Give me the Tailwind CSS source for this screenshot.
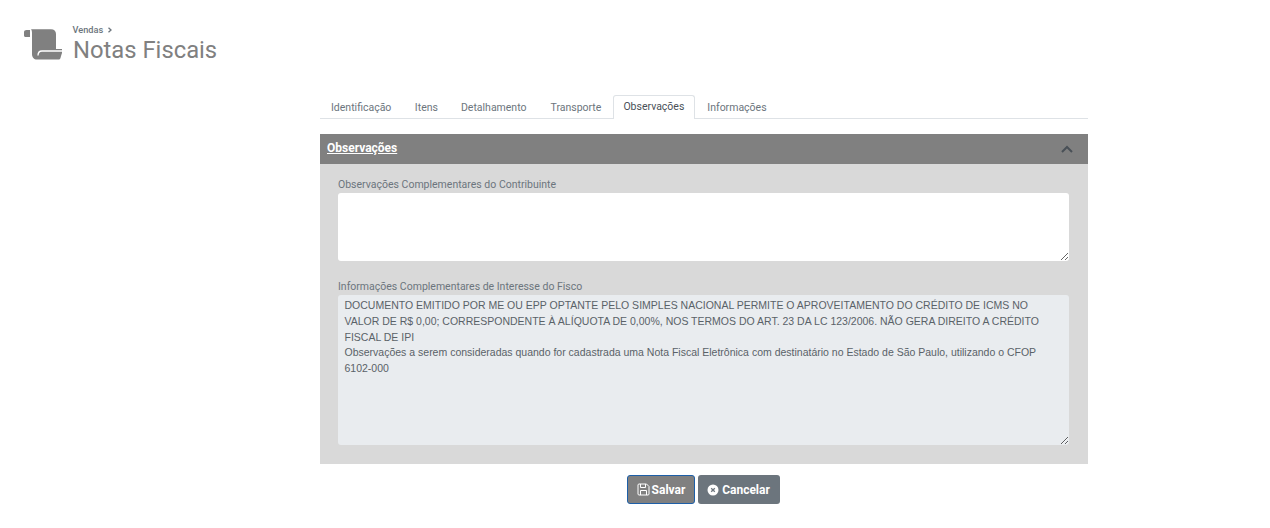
<!DOCTYPE html>
<html lang="pt-BR">
<head>
  <meta charset="UTF-8">
  <title>Notas Fiscais</title>
  <script src="https://cdn.jsdelivr.net/npm/@tailwindcss/browser@4"></script>
</head>
<body class="h-[528px] overflow-hidden bg-white font-['Roboto',sans-serif] text-[#6c757d]">
  <header class="flex items-start pl-[23px] pt-[24px] h-[95px]">
    <svg class="w-[41px] h-[33px] mt-[4px] text-[#808080]" viewBox="0 0 41 33" fill="currentColor">
      <path d="M1 4C1 2.700 2 2 3.500 2H7V9H2.500C1.600 9 1 8.400 1 7.500Z"/>
      <path d="M8 1.300H28C31 1.300 33 3 33 6V21H39V25C38.200 27 38 28.500 37.500 30C37 31 36.500 31.500 35.500 31.500H14C11 31.500 9 29.500 9 26V5C9 3.500 8.800 2.300 8 1.300Z"/>
      <path d="M39 23H19C16.500 23 15 25 15 27.500" fill="none" stroke="#fff" stroke-width="1.300"/>
    </svg>
    <div class="ml-[8.500px]">
      <div class="flex items-center gap-[4px] text-[9.200px] leading-[12px] font-medium text-[#6c757d]">
        <span>Vendas</span>
        <svg class="w-[6px] h-[6px]" viewBox="0 0 6 6" fill="none" stroke="currentColor" stroke-width="1.300"><path d="M1.500 0.800L4 3L1.500 5.200"/></svg>
      </div>
      <h1 class="text-[23.800px] leading-[28px] text-[#808080] ml-[0.500px]">Notas Fiscais</h1>
    </div>
  </header>

  <main class="w-[768px] ml-[320px]">
    <nav class="flex h-[24px] border-b border-[#dee2e6] text-[10.5px] leading-[13px] text-[#6c757d]">
      <a class="pl-[11px] pr-[12px] pt-[6px]">Identificação</a>
      <a class="px-[11.500px] pt-[6px]">Itens</a>
      <a class="pl-[11.500px] pr-[12.500px] pt-[6px]">Detalhamento</a>
      <a class="px-[11.500px] pt-[6px]">Transporte</a>
      <a class="h-[24px] px-[9.500px] pt-[4px] bg-white border border-b-0 border-[#dee2e6] rounded-t-[3px] text-[#495057]">Observações</a>
      <a class="px-[12.500px] pt-[6px]">Informações</a>
    </nav>

    <section class="mt-[15px]">
      <div class="flex items-center justify-between h-[30px] bg-[#808080] pl-[7px] pr-[15px]">
        <span class="text-[12px] leading-[14px] mb-[2px] font-bold text-white underline">Observações</span>
        <svg class="w-[12px] h-[8px] text-[#495057]" viewBox="0 0 12 8" fill="none" stroke="currentColor" stroke-width="2"><path d="M1 7L6 2L11 7"/></svg>
      </div>
      <div class="h-[300px] bg-[#d9d9d9] pl-[18px] pr-[19px] pt-[14px]">
        <label class="block text-[10.5px] leading-[13px] mb-[2px] text-[#6c757d]">Observações Complementares do Contribuinte</label>
        <textarea class="block w-full h-[68px] bg-white rounded-[3px] px-[7px] py-[3px] outline-none"></textarea>
        <label class="block text-[10.5px] leading-[13px] mt-[19px] mb-[2px] text-[#6c757d]">Informações Complementares de Interesse do Fisco</label>
        <textarea readonly class="block w-full h-[150px] bg-[#e9ecef] rounded-[3px] pl-[6.500px] pr-[7px] pt-[3px] outline-none font-['Liberation_Sans',sans-serif] text-[10.5px] leading-[15.750px] text-[#5a6268]">DOCUMENTO EMITIDO POR ME OU EPP OPTANTE PELO SIMPLES NACIONAL PERMITE O APROVEITAMENTO DO CRÉDITO DE ICMS NO VALOR DE R$ 0,00; CORRESPONDENTE À ALÍQUOTA DE 0,00%, NOS TERMOS DO ART. 23 DA LC 123/2006. NÃO GERA DIREITO A CRÉDITO FISCAL DE IPI
Observações a serem consideradas quando for cadastrada uma Nota Fiscal Eletrônica com destinatário no Estado de São Paulo, utilizando o CFOP 6102-000</textarea>
      </div>
    </section>

    <div class="flex justify-center gap-[3px] mt-[11px] pr-[2px] text-[12px] font-bold text-white">
      <button class="flex items-center gap-[2px] h-[29px] w-[68px] justify-center pl-[1px] bg-[#808080] border border-[#1d5fa8] rounded-[3px]">
        <svg class="w-[13px] h-[13px]" viewBox="0 0 13 13" fill="none" stroke="currentColor" stroke-width="1"><path d="M1 2C1 1.400 1.400 1 2 1H9.500L12 3.500V11C12 11.600 11.600 12 11 12H2C1.400 12 1 11.600 1 11Z"/><path d="M3.500 1V4.500H8.500V1"/><path d="M3.500 12V7.500H9.500V12"/></svg>
        Salvar
      </button>
      <button class="flex items-center gap-[3px] h-[29px] w-[82px] justify-center bg-[#6c757d] rounded-[3px]">
        <svg class="w-[12px] h-[12px]" viewBox="0 0 12 12"><circle cx="6" cy="6" r="5.500" fill="currentColor"/><path d="M4.200 4.200L7.800 7.800M7.800 4.200L4.200 7.800" stroke="#6c757d" stroke-width="1.300"/></svg>
        Cancelar
      </button>
    </div>
  </main>
</body>
</html>
